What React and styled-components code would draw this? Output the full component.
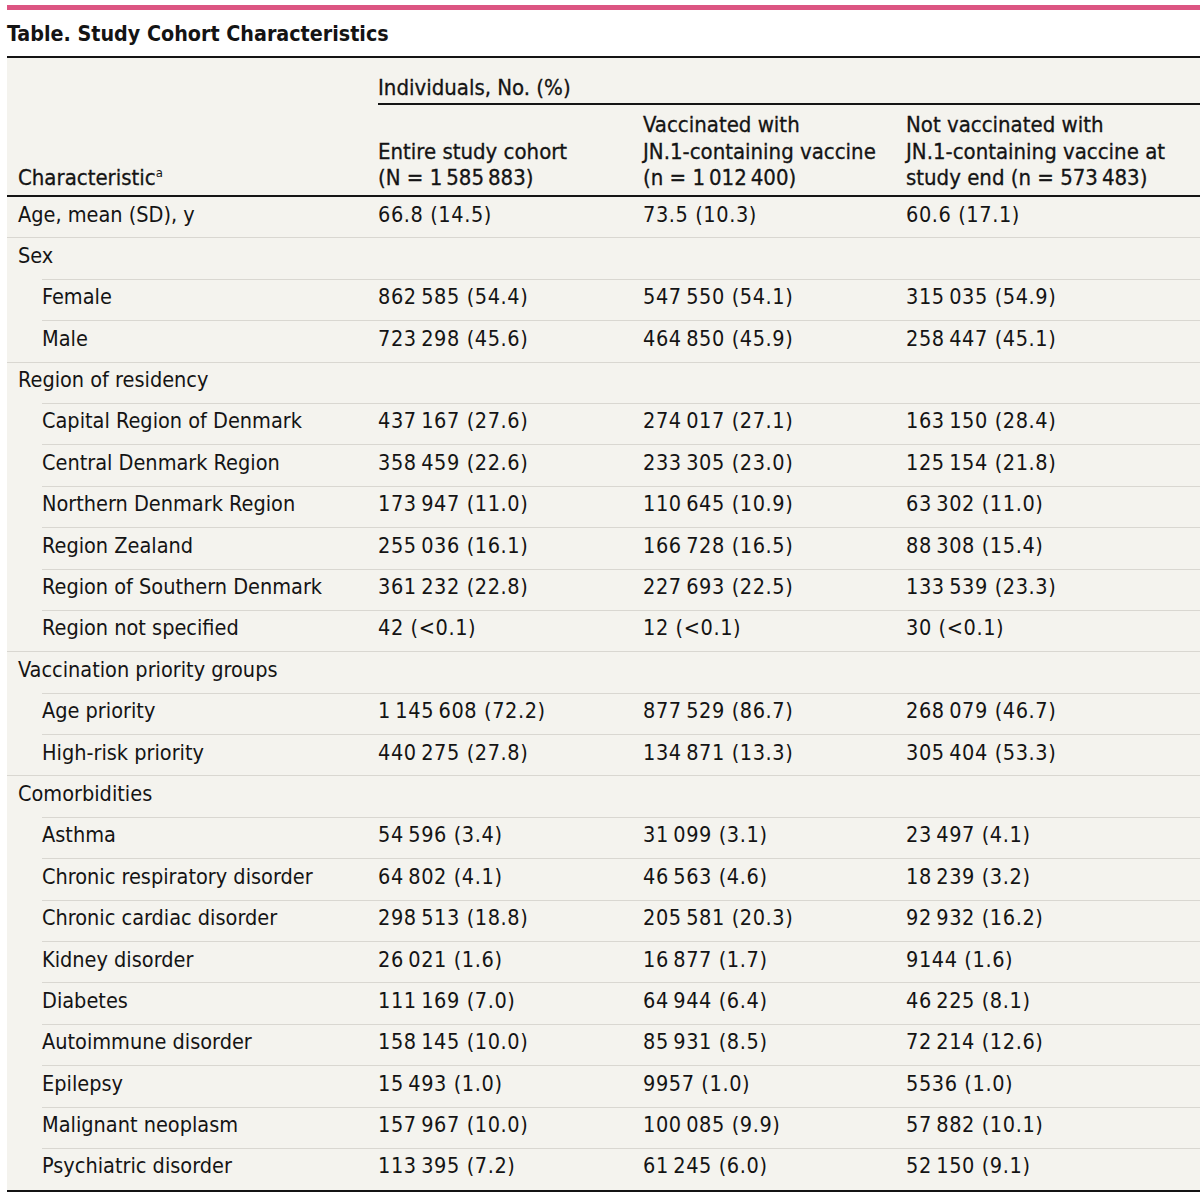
import React from 'react';
import styled, { createGlobalStyle } from 'styled-components';

const GlobalStyle = createGlobalStyle`
  body {
    margin: 0;
    background: #ffffff;
    color: #141414;
    font-family: "DejaVu Sans Condensed", "DejaVu Sans", sans-serif;
    font-stretch: condensed;
  }
`;

const Page = styled.div`
  padding: 5px 0 0 7px;
  width: 1193px;
`;

const Accent = styled.div`
  height: 5px;
  background: #dc5582;
`;

const Title = styled.h1`
  margin: 0;
  padding: 10px 0 8px;
  font-size: 21.3px;
  font-weight: 700;
  line-height: 28px;
  border-bottom: 2px solid #141414;
`;

const Table = styled.table`
  width: 100%;
  border-collapse: separate;
  border-spacing: 0;
  background: #f4f3ee;
  table-layout: fixed;
  border-bottom: 2px solid #141414;
`;

const Col = styled.col`
  width: ${(p) => p.$w}px;
`;

const HeadCell = styled.th`
  text-align: left;
  font-size: 22px;
  font-weight: 400;
  line-height: 26.5px;
  -webkit-text-stroke: 0.3px currentColor;
  vertical-align: bottom;
  white-space: nowrap;
  padding: ${(p) => (p.$top ? '17px 0 0 11px' : '7.5px 0 3.5px 11px')};
  border-bottom: ${(p) => (p.$top ? 'none' : '2px solid #141414')};
`;

const SpanLabel = styled.div`
  padding-bottom: 1px;
  border-bottom: 2px solid #141414;
`;

const Sup = styled.sup`
  font-size: 13px;
  vertical-align: 8px;
  line-height: 0;
  -webkit-text-stroke: 0;
`;

const Cell = styled.td`
  padding: 5.5px 0 10.9px ${(p) => (p.$indent ? 35 : 11)}px;
  font-size: 21.5px;
  letter-spacing: ${(p) => (p.$label ? 0 : 0.6)}px;
  line-height: 24px;
  white-space: nowrap;
  vertical-align: top;
  border-bottom: 1px solid
    ${(p) => (p.$rule === 'none' || p.$rule === 'inset' ? 'transparent' : '#d9d7d1')};
  background: ${(p) =>
    p.$rule === 'inset'
      ? 'linear-gradient(to right, transparent 35px, #d9d7d1 35px) left bottom / 100% 1px no-repeat border-box'
      : 'none'};
`;

const rows = [
  ['Age, mean (SD), y', '66.8 (14.5)', '73.5 (10.3)', '60.6 (17.1)'],
  ['Sex'],
  ['Female', '862 585 (54.4)', '547 550 (54.1)', '315 035 (54.9)', 1],
  ['Male', '723 298 (45.6)', '464 850 (45.9)', '258 447 (45.1)', 1],
  ['Region of residency'],
  ['Capital Region of Denmark', '437 167 (27.6)', '274 017 (27.1)', '163 150 (28.4)', 1],
  ['Central Denmark Region', '358 459 (22.6)', '233 305 (23.0)', '125 154 (21.8)', 1],
  ['Northern Denmark Region', '173 947 (11.0)', '110 645 (10.9)', '63 302 (11.0)', 1],
  ['Region Zealand', '255 036 (16.1)', '166 728 (16.5)', '88 308 (15.4)', 1],
  ['Region of Southern Denmark', '361 232 (22.8)', '227 693 (22.5)', '133 539 (23.3)', 1],
  ['Region not specified', '42 (<0.1)', '12 (<0.1)', '30 (<0.1)', 1],
  ['Vaccination priority groups'],
  ['Age priority', '1 145 608 (72.2)', '877 529 (86.7)', '268 079 (46.7)', 1],
  ['High-risk priority', '440 275 (27.8)', '134 871 (13.3)', '305 404 (53.3)', 1],
  ['Comorbidities'],
  ['Asthma', '54 596 (3.4)', '31 099 (3.1)', '23 497 (4.1)', 1],
  ['Chronic respiratory disorder', '64 802 (4.1)', '46 563 (4.6)', '18 239 (3.2)', 1],
  ['Chronic cardiac disorder', '298 513 (18.8)', '205 581 (20.3)', '92 932 (16.2)', 1],
  ['Kidney disorder', '26 021 (1.6)', '16 877 (1.7)', '9144 (1.6)', 1],
  ['Diabetes', '111 169 (7.0)', '64 944 (6.4)', '46 225 (8.1)', 1],
  ['Autoimmune disorder', '158 145 (10.0)', '85 931 (8.5)', '72 214 (12.6)', 1],
  ['Epilepsy', '15 493 (1.0)', '9957 (1.0)', '5536 (1.0)', 1],
  ['Malignant neoplasm', '157 967 (10.0)', '100 085 (9.9)', '57 882 (10.1)', 1],
  ['Psychiatric disorder', '113 395 (7.2)', '61 245 (6.0)', '52 150 (9.1)', 1],
];

// digit groups are split by a thin space, as in the printed table
const thin = (s) => (s ? s.replace(/ (?=\d)/g, '\u2009') : '');

export default function App() {
  return (
    <Page>
      <GlobalStyle />
      <Accent />
      <Title>Table. Study Cohort Characteristics</Title>
      <Table>
        <colgroup>
          <Col $w={360} />
          <Col $w={265} />
          <Col $w={263} />
          <Col $w={305} />
        </colgroup>
        <thead>
          <tr>
            <HeadCell $top />
            <HeadCell $top colSpan={3}>
              <SpanLabel>Individuals, No. (%)</SpanLabel>
            </HeadCell>
          </tr>
          <tr>
            <HeadCell>
              Characteristic<Sup>a</Sup>
            </HeadCell>
            <HeadCell>
              Entire study cohort
              <br />
              (N = {thin('1 585 883')})
            </HeadCell>
            <HeadCell>
              Vaccinated with
              <br />
              JN.1-containing vaccine
              <br />
              (n = {thin('1 012 400')})
            </HeadCell>
            <HeadCell>
              Not vaccinated with
              <br />
              JN.1-containing vaccine at
              <br />
              study end (n = {thin('573 483')})
            </HeadCell>
          </tr>
        </thead>
        <tbody>
          {rows.map((r, i) => {
            const next = rows[i + 1];
            const rule = !next ? 'none' : next[4] ? 'inset' : 'full';
            const cellRule = rule === 'inset' ? 'full' : rule;
            return (
              <tr key={r[0]}>
                <Cell $label $indent={r[4]} $rule={rule}>
                  {r[0]}
                </Cell>
                <Cell $rule={cellRule}>{thin(r[1])}</Cell>
                <Cell $rule={cellRule}>{thin(r[2])}</Cell>
                <Cell $rule={cellRule}>{thin(r[3])}</Cell>
              </tr>
            );
          })}
        </tbody>
      </Table>
    </Page>
  );
}
